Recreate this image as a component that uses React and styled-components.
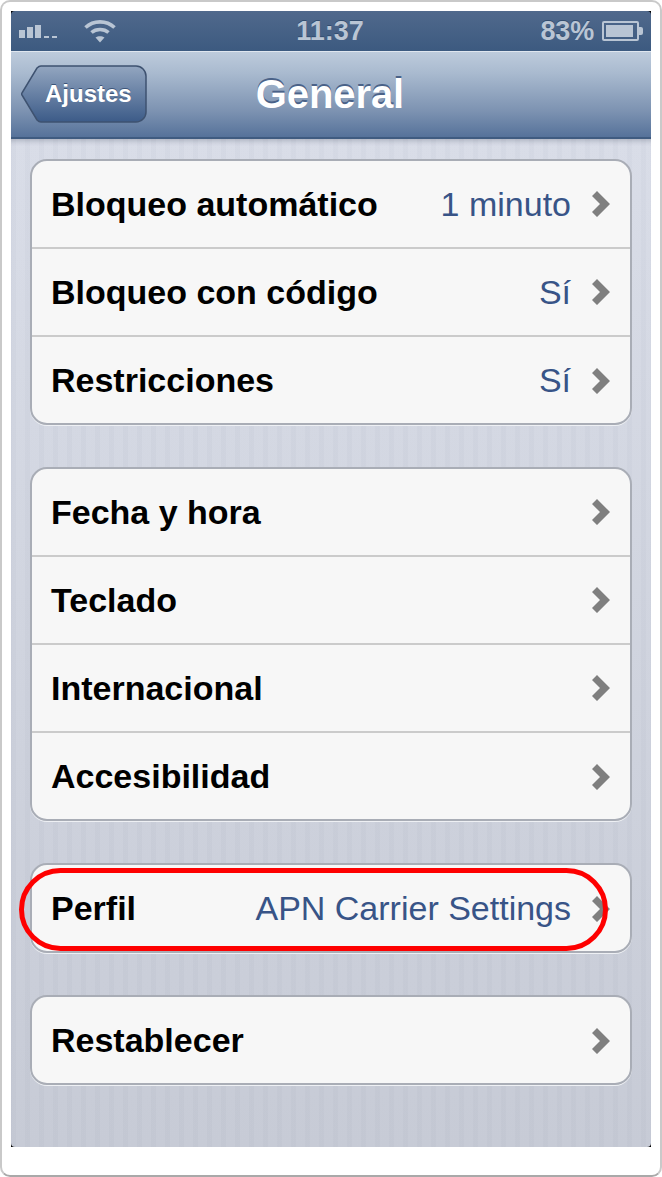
import React from 'react';
import styled, { createGlobalStyle } from 'styled-components';

const Global = createGlobalStyle`
  html, body { margin: 0; padding: 0; background: #fff; }
  * { box-sizing: border-box; }
  body { font-family: "Liberation Sans", Arial, sans-serif; }
`;

const Frame = styled.div`
  width: 662px;
  height: 1177px;
  padding: 9px;
  background: #fff;
  border: 2px solid #c9c9c9;
  border-bottom-color: #a9a9a9;
  border-radius: 10px;
`;

const Screen = styled.div`
  width: 640px;
  height: 1136px;
  background: #000;
  display: flex;
  flex-direction: column;
`;

const StatusBar = styled.div`
  height: 40px;
  flex: none;
  display: grid;
  grid-template-columns: 1fr auto 1fr;
  align-items: center;
  padding: 0 8px;
  border-radius: 4px 4px 0 0;
  background: linear-gradient(#50698c, #3c5a80);
  color: #b9c5d4;
  font-weight: 700;
  text-shadow: 0 -1px 0 #324c6e;
`;

const StatusLeft = styled.div`
  display: flex;
  align-items: center;
  gap: 27px;
`;

const StatusRight = styled.div`
  display: flex;
  align-items: center;
  justify-content: flex-end;
  gap: 8px;
  font-size: 27px;
  letter-spacing: -0.2px;
  color: #b9c5d4;
`;

const Time = styled.div`
  font-size: 27px;
  position: relative;
  left: -1px;
`;

const NavBar = styled.div`
  height: 88px;
  flex: none;
  display: grid;
  grid-template-columns: 1fr auto 1fr;
  align-items: center;
  padding: 0 10px;
  border-top: 1px solid #dfe6ef;
  border-bottom: 2px solid #3f5b80;
  background: linear-gradient(#bdcbdc, #a9bacf 25%, #7c92b1 70%, #56729a);
`;

const BackButton = styled.div`
  position: relative;
  width: 126px;
  height: 59px;
  display: flex;
  align-items: center;
  padding-left: 24px;
  color: #fff;
  font-size: 24px;
  font-weight: 700;
  text-shadow: 0 -1px 0 #3c5478;
`;

const BackShape = styled.svg`
  position: absolute;
  inset: 0;
`;

const BackLabel = styled.span`
  position: relative;
  top: -1px;
`;

const Title = styled.div`
  color: #fff;
  font-size: 40px;
  font-weight: 700;
  letter-spacing: -0.1px;
  text-shadow: 0 -2px 0 #4a6288;
  position: relative;
  left: -1px;
`;

const Content = styled.div`
  flex: 1;
  display: flex;
  flex-direction: column;
  gap: 42px;
  padding: 20px 19px 0;
  border-radius: 0 0 4px 4px;
  background:
    repeating-linear-gradient(90deg, rgba(120,130,150,0.035) 0 5px, rgba(255,255,255,0.025) 5px 14px),
    linear-gradient(#d8dce7, #c6cad5);
  box-shadow: inset 0 6px 5px -4px rgba(70,80,100,0.3);
`;

const Group = styled.div`
  position: relative;
  width: 602px;
  background: #f7f7f7;
  border: 2px solid #a9adb6;
  border-radius: 17px;
  box-shadow: 0 1px 0 #eef0f4;
`;

const Row = styled.div`
  height: 88px;
  display: flex;
  align-items: center;
  padding: 0 20px 0 19px;
  border-bottom: 2px solid #cbcbcb;
  &:last-of-type { height: 86px; padding-top: 1px; border-bottom: none; }
`;

const Label = styled.div`
  flex: 1;
  font-size: 34px;
  font-weight: 700;
  color: #000;
`;

const Value = styled.div`
  font-size: 34px;
  color: #385487;
  margin-right: 21px;
`;

const Chevron = styled.svg`
  flex: none;
  width: 18px;
  height: 26px;
`;

const Oval = styled.span`
  display: block;
  position: absolute;
  left: -13px;
  top: 3px;
  width: 589px;
  height: 83px;
  border: 5px solid #fe0000;
  border-radius: 42px;
  pointer-events: none;
`;

const Chev = () => (
  <Chevron viewBox="0 0 18 26">
    <polygon points="0,5 5,0 18,13 5,26 0,21 8,13" fill="#7f7f7f" />
  </Chevron>
);

const SettingRow = ({ label, value }) => (
  <Row>
    <Label>{label}</Label>
    {value && <Value>{value}</Value>}
    <Chev />
  </Row>
);

const groups = [
  [['Bloqueo automático', '1 minuto'], ['Bloqueo con código', 'Sí'], ['Restricciones', 'Sí']],
  [['Fecha y hora'], ['Teclado'], ['Internacional'], ['Accesibilidad']],
];

export default function App() {
  return (
    <>
      <Global />
      <Frame>
        <Screen>
          <StatusBar>
            <StatusLeft>
              <svg width="38" height="14" viewBox="0 0 38 14">
                <g fill="#b9c5d4">
                  <rect x="0" y="6" width="6" height="8" />
                  <rect x="8" y="3" width="6" height="11" />
                  <rect x="16" y="1" width="6" height="13" />
                  <rect x="25" y="12" width="5" height="2" />
                  <rect x="33" y="12" width="5" height="2" />
                </g>
              </svg>
              <svg width="32" height="26" viewBox="0 0 32 26">
                <g fill="none" stroke="#b9c5d4" strokeWidth="3.6">
                  <path d="M1.5 9.5 C9.5 2 22.5 2 30.5 9.5" />
                  <path d="M7.5 14.5 C12 10.5 20 10.5 24.5 14.5" />
                </g>
                <path d="M11.5 19.5 C14 17.7 18 17.7 20.5 19.5 L16 24.5 Z" fill="#b9c5d4" />
              </svg>
            </StatusLeft>
            <Time>11:37</Time>
            <StatusRight>
              <span>83%</span>
              <svg width="41" height="20" viewBox="0 0 41 20">
                <rect x="1" y="1" width="35" height="18" fill="none" stroke="#b9c5d4" strokeWidth="2" rx="1" />
                <rect x="4" y="4" width="27" height="12" fill="#b9c5d4" />
                <path d="M37 6 h2 a2 2 0 0 1 2 2 v4 a2 2 0 0 1 -2 2 h-2 Z" fill="#b9c5d4" />
              </svg>
            </StatusRight>
          </StatusBar>
          <NavBar>
            <div>
              <BackButton>
                <BackShape width="126" height="59" viewBox="0 0 126 59">
                  <defs>
                    <linearGradient id="backFill" x1="0" y1="0" x2="0" y2="1">
                      <stop offset="0" stopColor="#93a6c0" />
                      <stop offset="1" stopColor="#3c5b88" />
                    </linearGradient>
                  </defs>
                  <path
                    d="M20 1 H115 A10 10 0 0 1 125 11 V47 A10 10 0 0 1 115 57 H20 Q18 57 16 55 L1 30 Q0 29 1 28 L16 3 Q18 1 20 1 Z"
                    fill="url(#backFill)"
                    stroke="#3e5270"
                    strokeWidth="1.5"
                  />
                </BackShape>
                <BackLabel>Ajustes</BackLabel>
              </BackButton>
            </div>
            <Title>General</Title>
            <div />
          </NavBar>
          <Content>
            {groups.map((rows, i) => (
              <Group key={i}>
                {rows.map(([label, value]) => (
                  <SettingRow key={label} label={label} value={value} />
                ))}
              </Group>
            ))}
            <Group>
              <SettingRow label="Perfil" value="APN Carrier Settings" />
              <Oval />
            </Group>
            <Group>
              <SettingRow label="Restablecer" />
            </Group>
          </Content>
        </Screen>
      </Frame>
    </>
  );
}
